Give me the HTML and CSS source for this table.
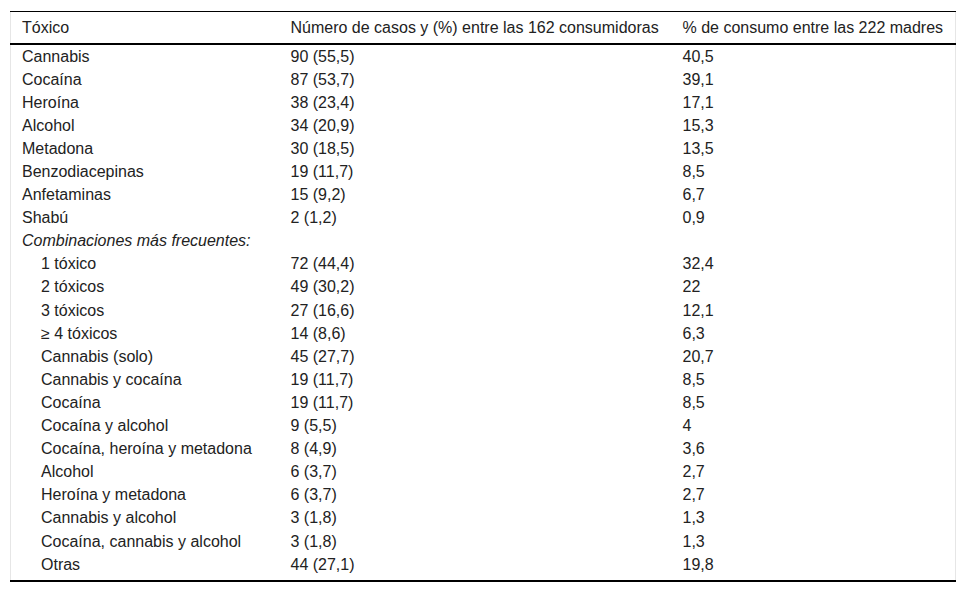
FILE: index.html
```html
<!DOCTYPE html>
<html lang="es">
<head>
<meta charset="utf-8">
<title>Tóxicos</title>
<link rel="stylesheet" href="styles.css">
</head>
<body>
<div class="wrap">
<table class="tbl">
<colgroup><col class="c1"><col class="c2"><col class="c3"></colgroup>
<thead>
<tr><th>Tóxico</th><th>Número de casos y (%) entre las 162 consumidoras</th><th>% de consumo entre las 222 madres</th></tr>
</thead>
<tbody>
<tr><td>Cannabis</td><td>90 (55,5)</td><td>40,5</td></tr>
<tr><td>Cocaína</td><td>87 (53,7)</td><td>39,1</td></tr>
<tr><td>Heroína</td><td>38 (23,4)</td><td>17,1</td></tr>
<tr><td>Alcohol</td><td>34 (20,9)</td><td>15,3</td></tr>
<tr><td>Metadona</td><td>30 (18,5)</td><td>13,5</td></tr>
<tr><td>Benzodiacepinas</td><td>19 (11,7)</td><td>8,5</td></tr>
<tr><td>Anfetaminas</td><td>15 (9,2)</td><td>6,7</td></tr>
<tr><td>Shabú</td><td>2 (1,2)</td><td>0,9</td></tr>
<tr><td class="it">Combinaciones más frecuentes:</td><td></td><td></td></tr>
<tr><td class="ind">1 tóxico</td><td>72 (44,4)</td><td>32,4</td></tr>
<tr><td class="ind">2 tóxicos</td><td>49 (30,2)</td><td>22</td></tr>
<tr><td class="ind">3 tóxicos</td><td>27 (16,6)</td><td>12,1</td></tr>
<tr><td class="ind">≥ 4 tóxicos</td><td>14 (8,6)</td><td>6,3</td></tr>
<tr><td class="ind">Cannabis (solo)</td><td>45 (27,7)</td><td>20,7</td></tr>
<tr><td class="ind">Cannabis y cocaína</td><td>19 (11,7)</td><td>8,5</td></tr>
<tr><td class="ind">Cocaína</td><td>19 (11,7)</td><td>8,5</td></tr>
<tr><td class="ind">Cocaína y alcohol</td><td>9 (5,5)</td><td>4</td></tr>
<tr><td class="ind">Cocaína, heroína y metadona</td><td>8 (4,9)</td><td>3,6</td></tr>
<tr><td class="ind">Alcohol</td><td>6 (3,7)</td><td>2,7</td></tr>
<tr><td class="ind">Heroína y metadona</td><td>6 (3,7)</td><td>2,7</td></tr>
<tr><td class="ind">Cannabis y alcohol</td><td>3 (1,8)</td><td>1,3</td></tr>
<tr><td class="ind">Cocaína, cannabis y alcohol</td><td>3 (1,8)</td><td>1,3</td></tr>
<tr><td class="ind">Otras</td><td>44 (27,1)</td><td>19,8</td></tr>
</tbody>
</table>
</div>
</body>
</html>
```

FILE: styles.css
```css
html, body {
  margin: 0;
  padding: 0;
  background: #fff;
}
.wrap {
  padding: 11px 10px 0 10px;
}
.tbl {
  width: 946px;
  border-collapse: collapse;
  font-family: "Liberation Sans", Arial, sans-serif;
  font-size: 16px;
  color: #222;
  border-left: 1px solid #e6e6e6;
  border-right: 1px solid #e6e6e6;
  border-bottom: 2px solid #000;
}
.c1 { width: 269px; }
.c2 { width: 392px; }
.tbl thead th {
  font-weight: normal;
  text-align: left;
  height: 31px;
  padding: 0 0 0 11px;
  border-top: 1px solid #000;
  border-bottom: 2px solid #000;
  vertical-align: middle;
  line-height: 18px;
}
.tbl tbody td {
  height: 23.1px;
  padding: 0 0 0 11px;
  vertical-align: middle;
  line-height: 18px;
}
.tbl tbody tr:last-child td {
  height: 23px;
  padding-bottom: 4px;
}
.it { font-style: italic; }
.tbl td.ind { padding-left: 30px; }
```
